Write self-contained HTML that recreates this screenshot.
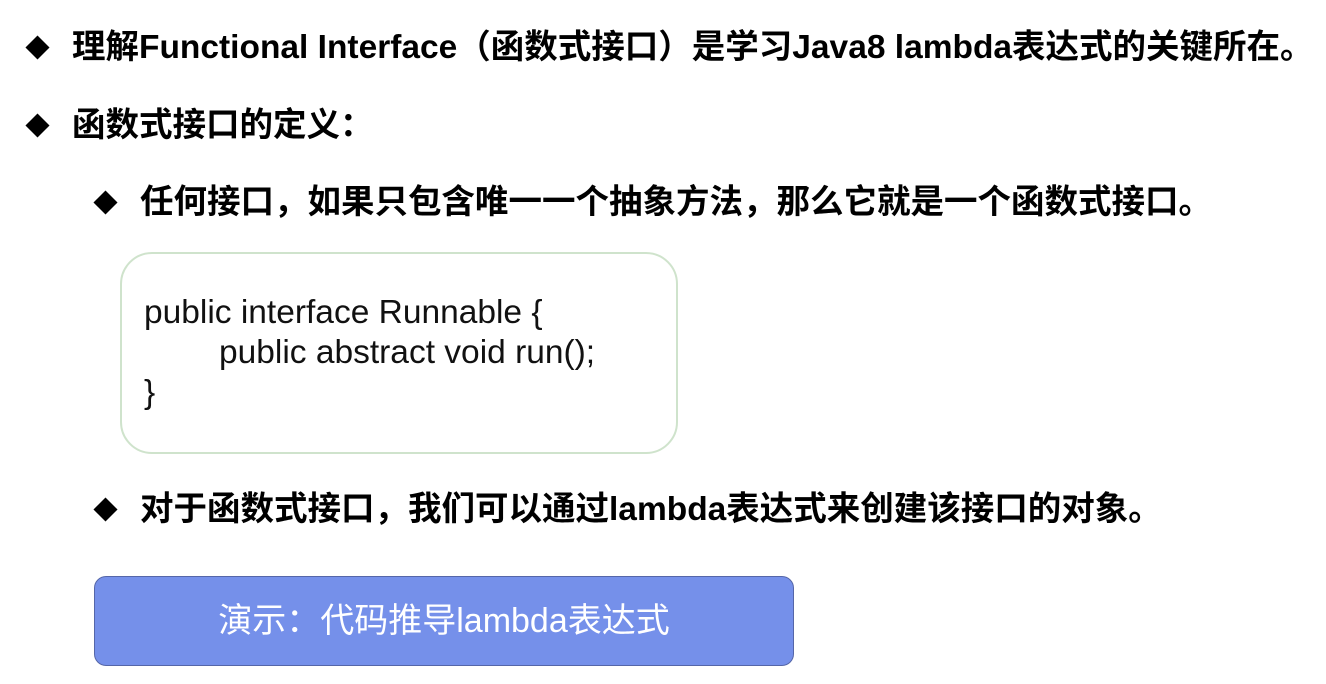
<!DOCTYPE html>
<html><head><meta charset="utf-8"><style>
body{margin:0;width:1326px;height:684px;background:#fff;overflow:hidden;position:relative;font-family:"Liberation Sans","Noto Sans CJK SC",sans-serif;}
.t{position:absolute;font-weight:bold;font-size:33.5px;color:#000;white-space:nowrap;line-height:1;}
.d{position:absolute;width:17px;height:17px;background:#000;transform:rotate(45deg);}
.code{position:absolute;left:120px;top:252px;width:554px;height:198px;border:2px solid #cfe3cc;border-radius:32px;}
.c{position:absolute;font-size:33.5px;color:#111;white-space:nowrap;line-height:1;}
.btn{position:absolute;left:94px;top:576px;width:698px;height:88px;background:#7590ea;border:1px solid #5566a8;border-radius:12px;color:#fff;font-size:34px;text-align:center;line-height:88px;}
</style></head><body>
<div class="d" style="left:29px;top:39px"></div>
<div class="t" style="left:72px;top:31px">理解Functional Interface（函数式接口）是学习Java8 lambda表达式的关键所在。</div>
<div class="d" style="left:29px;top:117px"></div>
<div class="t" style="left:72px;top:109px">函数式接口的定义：</div>
<div class="d" style="left:97px;top:194px"></div>
<div class="t" style="left:140px;top:186px">任何接口，如果只包含唯一一个抽象方法，那么它就是一个函数式接口。</div>
<div class="code"></div>
<div class="c" style="left:144px;top:296px">public interface Runnable {</div>
<div class="c" style="left:219px;top:336px">public abstract void run();</div>
<div class="c" style="left:144px;top:376px">}</div>
<div class="d" style="left:97px;top:501px"></div>
<div class="t" style="left:140px;top:493px">对于函数式接口，我们可以通过lambda表达式来创建该接口的对象。</div>
<div class="btn">演示：代码推导lambda表达式</div>
</body></html>
